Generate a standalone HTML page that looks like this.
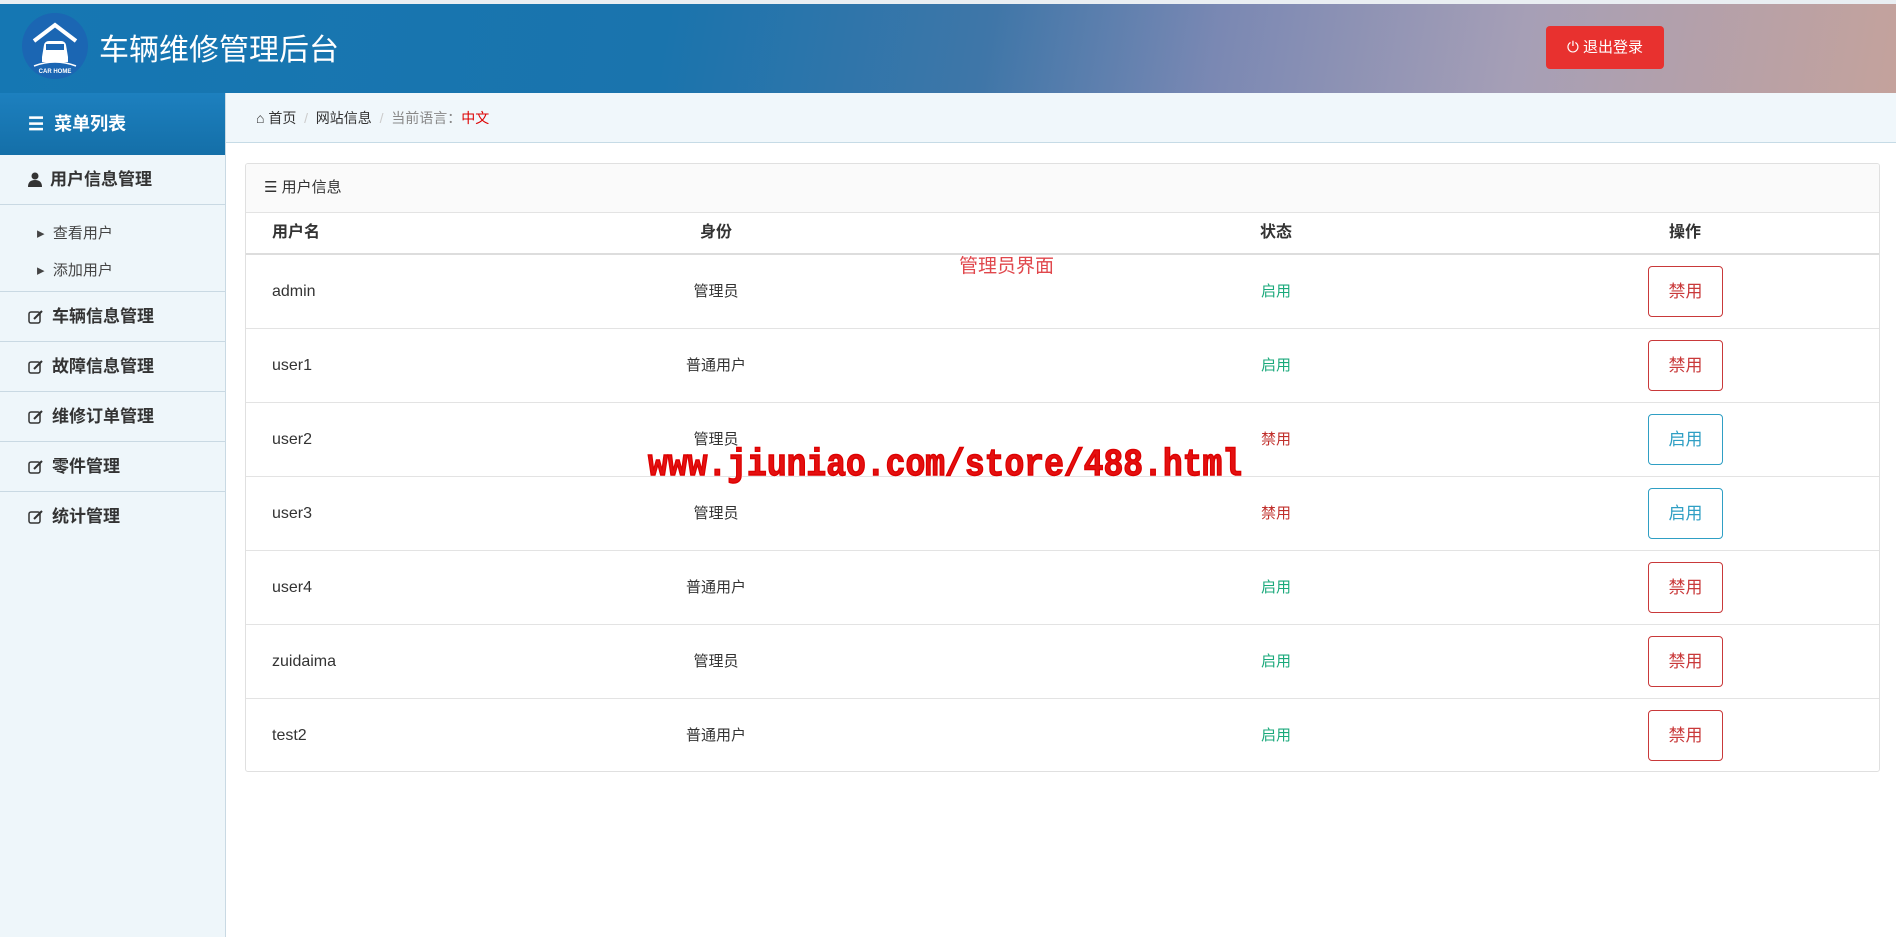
<!DOCTYPE html>
<html><head><meta charset="utf-8"><style>
*{margin:0;padding:0;box-sizing:border-box}
body{width:1896px;height:937px;overflow:hidden;background:#fff;font-family:"Liberation Sans","Noto Sans CJK SC",sans-serif;position:relative;color:#333}
.strip{position:absolute;left:0;top:0;width:1896px;height:4px;background:#e9eef2}
.hdr{position:absolute;left:0;top:4px;width:1896px;height:89px;background:linear-gradient(100deg,#1577b3 0%,#1a74ad 35%,#3f76a8 52%,#7a88b3 64%,#a69fb6 80%,#c4a29c 100%)}
.logo{position:absolute;left:22px;top:9px;width:66px;height:66px;border-radius:50%;background:#1b66b3}
.title{position:absolute;left:99px;top:21px;font-size:30px;color:#fff}
.logout{position:absolute;left:1546px;top:22px;width:118px;height:43px;background:#e8312f;border-radius:4px;color:#fff;font-size:15px;line-height:43px;text-align:center}
.side{position:absolute;left:0;top:93px;width:226px;height:844px;background:#eef6fa;border-right:1px solid #c9d9e3}
.mhead{height:62px;background:linear-gradient(180deg,#1d80bf,#146fa8);color:#fff;font-weight:bold;font-size:18px;line-height:62px;padding-left:28px}
.it{height:50px;border-bottom:1px solid #c9d9e3;font-weight:bold;font-size:17px;line-height:50px;padding-left:28px;color:#333}
.it svg{vertical-align:-2px;margin-right:8px}
.sub{height:87px;border-bottom:1px solid #c9d9e3;padding-top:10px}
.sub div{height:37px;line-height:37px;font-size:15px;color:#444;padding-left:37px}
.crumb{position:absolute;left:226px;top:93px;width:1670px;height:50px;background:#f0f7fb;border-bottom:1px solid #c6dbe6;font-size:14px;line-height:50px;padding-left:30px;color:#333}
.panel{position:absolute;left:245px;top:163px;width:1635px;height:609px;border:1px solid #e0e0e0;border-radius:3px;overflow:hidden}
.ph{height:49px;background:#fafafa;border-bottom:1px solid #e3e3e3;font-size:15px;line-height:48px;padding-left:18px}
.th{position:relative;height:42px;line-height:40px;border-bottom:2px solid #ddd;font-weight:bold;font-size:16px}
.row{position:relative;height:74px;line-height:73px;border-bottom:1px solid #e3e3e3;font-size:16px}
.row:last-child{border-bottom:none}
.c{position:absolute;top:0;width:200px;margin-left:-100px;text-align:center;white-space:nowrap}
.l{position:absolute;left:26px;top:0}
.g{color:#1aa97b;font-size:15px}.r{color:#c0302c;font-size:15px}
.btn{position:absolute;left:1402px;top:11px;width:75px;height:51px;border:1px solid #c9393a;border-radius:4px;color:#c9393a;font-size:17px;line-height:49px;text-align:center}
.btn.b{border-color:#2f9fc4;color:#2f9fc4}
.wm{position:absolute;left:648px;top:444px;font-family:"Liberation Mono",monospace;font-weight:bold;font-size:33px;color:#e41010;transform:scaleY(1.15);transform-origin:left top;-webkit-text-stroke:1.2px #d00;text-shadow:1px 1px 0 #fff}
.adm{position:absolute;left:959px;top:251px;font-size:19px;color:#e0474c}
</style></head><body>
<div class="strip"></div>
<div class="hdr">
<div class="logo"><svg width="66" height="66" viewBox="0 0 66 66"><path d="M12 28 L33 12 L54 28" fill="none" stroke="#fff" stroke-width="4"/><path d="M20 44 L22 32 Q23 28 27 28 L39 28 Q43 28 44 32 L46 44 L46 49 L20 49 Z" fill="#fff"/><rect x="24" y="31" width="18" height="6" fill="#1b66b3"/><path d="M12 53 Q33 45 54 53" fill="none" stroke="#fff" stroke-width="1.5"/><text x="33" y="60" font-size="6" fill="#fff" text-anchor="middle" font-weight="bold" font-family="Liberation Sans">CAR HOME</text></svg></div>
<div class="title">车辆维修管理后台</div>
<div class="logout">⏻ 退出登录</div>
</div>
<div class="side">
<div class="mhead">☰&nbsp; 菜单列表</div>
<div class="it"><svg width="14" height="15" viewBox="0 0 14 15"><circle cx="7" cy="4" r="3.5" fill="#333"/><path d="M0 15 Q0 8 7 8 Q14 8 14 15 Z" fill="#333"/></svg>用户信息管理</div>
<div class="sub"><div>▸&nbsp; 查看用户</div><div>▸&nbsp; 添加用户</div></div>
<div class="it"><svg width="16" height="15" viewBox="0 0 16 15"><rect x="1" y="3" width="11" height="11" rx="2" fill="none" stroke="#333" stroke-width="1.5"/><path d="M6 10 L14 2" stroke="#333" stroke-width="2"/></svg>车辆信息管理</div>
<div class="it"><svg width="16" height="15" viewBox="0 0 16 15"><rect x="1" y="3" width="11" height="11" rx="2" fill="none" stroke="#333" stroke-width="1.5"/><path d="M6 10 L14 2" stroke="#333" stroke-width="2"/></svg>故障信息管理</div>
<div class="it"><svg width="16" height="15" viewBox="0 0 16 15"><rect x="1" y="3" width="11" height="11" rx="2" fill="none" stroke="#333" stroke-width="1.5"/><path d="M6 10 L14 2" stroke="#333" stroke-width="2"/></svg>维修订单管理</div>
<div class="it"><svg width="16" height="15" viewBox="0 0 16 15"><rect x="1" y="3" width="11" height="11" rx="2" fill="none" stroke="#333" stroke-width="1.5"/><path d="M6 10 L14 2" stroke="#333" stroke-width="2"/></svg>零件管理</div>
<div class="it" style="border-bottom:none"><svg width="16" height="15" viewBox="0 0 16 15"><rect x="1" y="3" width="11" height="11" rx="2" fill="none" stroke="#333" stroke-width="1.5"/><path d="M6 10 L14 2" stroke="#333" stroke-width="2"/></svg>统计管理</div>
</div>
<div class="crumb">⌂ 首页 <span style="color:#ccc">&nbsp;/&nbsp;</span> 网站信息 <span style="color:#ccc">&nbsp;/&nbsp;</span> <span style="color:#888">当前语言：</span><span style="color:#d00">中文</span></div>
<div class="panel">
<div class="ph">☰ 用户信息</div>
<div class="th"><span class="l">用户名</span><span class="c" style="left:470px">身份</span><span class="c" style="left:1030px">状态</span><span class="c" style="left:1439px">操作</span></div>
<div class="row"><span class="l">admin</span><span class="c" style="left:470px;font-size:15px">管理员</span><span class="c g" style="left:1030px">启用</span><div class="btn">禁用</div></div>
<div class="row"><span class="l">user1</span><span class="c" style="left:470px;font-size:15px">普通用户</span><span class="c g" style="left:1030px">启用</span><div class="btn">禁用</div></div>
<div class="row"><span class="l">user2</span><span class="c" style="left:470px;font-size:15px">管理员</span><span class="c r" style="left:1030px">禁用</span><div class="btn b">启用</div></div>
<div class="row"><span class="l">user3</span><span class="c" style="left:470px;font-size:15px">管理员</span><span class="c r" style="left:1030px">禁用</span><div class="btn b">启用</div></div>
<div class="row"><span class="l">user4</span><span class="c" style="left:470px;font-size:15px">普通用户</span><span class="c g" style="left:1030px">启用</span><div class="btn">禁用</div></div>
<div class="row"><span class="l">zuidaima</span><span class="c" style="left:470px;font-size:15px">管理员</span><span class="c g" style="left:1030px">启用</span><div class="btn">禁用</div></div>
<div class="row"><span class="l">test2</span><span class="c" style="left:470px;font-size:15px">普通用户</span><span class="c g" style="left:1030px">启用</span><div class="btn">禁用</div></div>
</div>
<div class="adm">管理员界面</div>
<div class="wm">www.jiuniao.com/store/488.html</div>
</body></html>
